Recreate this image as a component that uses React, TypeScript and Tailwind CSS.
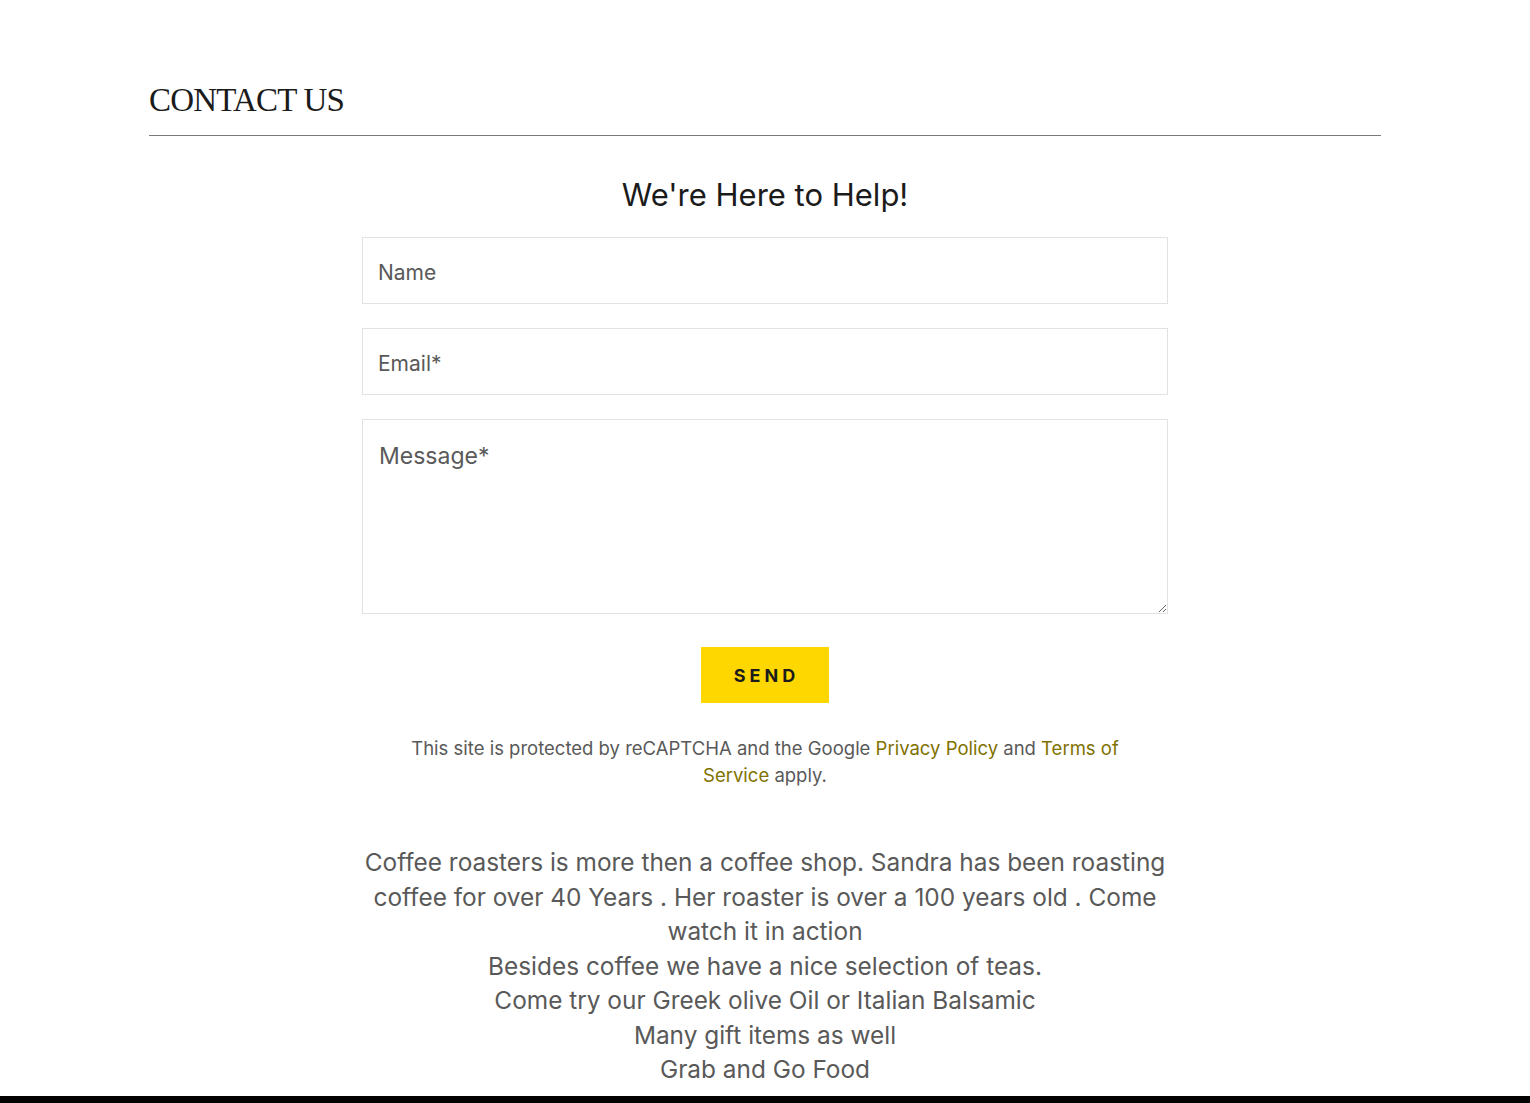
const sans = "font-['Inter','Noto_Sans',sans-serif]";

function Field({ label, tall = false }: { label: string; tall?: boolean }) {
  if (tall) {
    return (
      <textarea
        placeholder={label}
        className={`block h-[195px] w-full resize-y border border-[#e2e2e2] bg-white px-4 pt-[19px] text-[23px] text-[#595959] placeholder:text-[#595959] outline-none ${sans}`}
      />
    );
  }
  return (
    <input
      placeholder={label}
      className={`block h-[67px] w-full border border-[#e2e2e2] bg-white px-[15px] pt-[3px] text-[21px] text-[#595959] placeholder:text-[#595959] outline-none ${sans}`}
    />
  );
}

export default function App() {
  return (
    <div className="min-h-screen bg-white">
      <section className="mx-auto w-[1232px] pt-[80px]">
        <h2 className="font-['Liberation_Serif','DejaVu_Serif',serif] text-[33px] leading-[40px] tracking-[-0.8px] text-[#1b1b1b]">
          CONTACT US
        </h2>
        <div className="mt-[15px] h-px bg-[#7a7a7a]" />

        <div className="mx-auto w-[806px]">
          <h3 className={`mt-[37px] text-center text-[31px] leading-[44px] text-[#1b1b1b] ${sans}`}>
            We're Here to Help!
          </h3>

          <form className="mt-[20px] flex flex-col gap-[24px]">
            <Field label="Name" />
            <Field label="Email*" />
            <Field label="Message*" tall />
          </form>

          <div className="mt-[33px] flex justify-center">
            <button
              type="button"
              className={`h-[56px] w-[128px] bg-[#fed700] pl-[3px] text-[18px] font-bold tracking-[4px] text-[#1b1b1b] ${sans}`}
            >
              SEND
            </button>
          </div>

          <p className={`mt-[32px] whitespace-nowrap text-center text-[18.5px] leading-[27px] text-[#595959] ${sans}`}>
            This site is protected by reCAPTCHA and the Google{" "}
            <a className="text-[#7f7100]">Privacy Policy</a> and{" "}
            <a className="text-[#7f7100]">
              Terms of
              <br />
              Service
            </a>{" "}
            apply.
          </p>

          <div className={`-mx-4 mt-[56px] text-center text-[24.4px] leading-[34.5px] text-[#595959] ${sans}`}>
            <p>
              Coffee roasters is more then a coffee shop. Sandra has been roasting
              <br />
              coffee for over 40 Years . Her roaster is over a 100 years old . Come
              <br />
              watch it in action
            </p>
            <p>Besides coffee we have a nice selection of teas.</p>
            <p>Come try our Greek olive Oil or Italian Balsamic</p>
            <p>Many gift items as well</p>
            <p>Grab and Go Food</p>
          </div>
        </div>
      </section>
      <footer className="mt-[9px] h-[200px] bg-black" />
    </div>
  );
}
